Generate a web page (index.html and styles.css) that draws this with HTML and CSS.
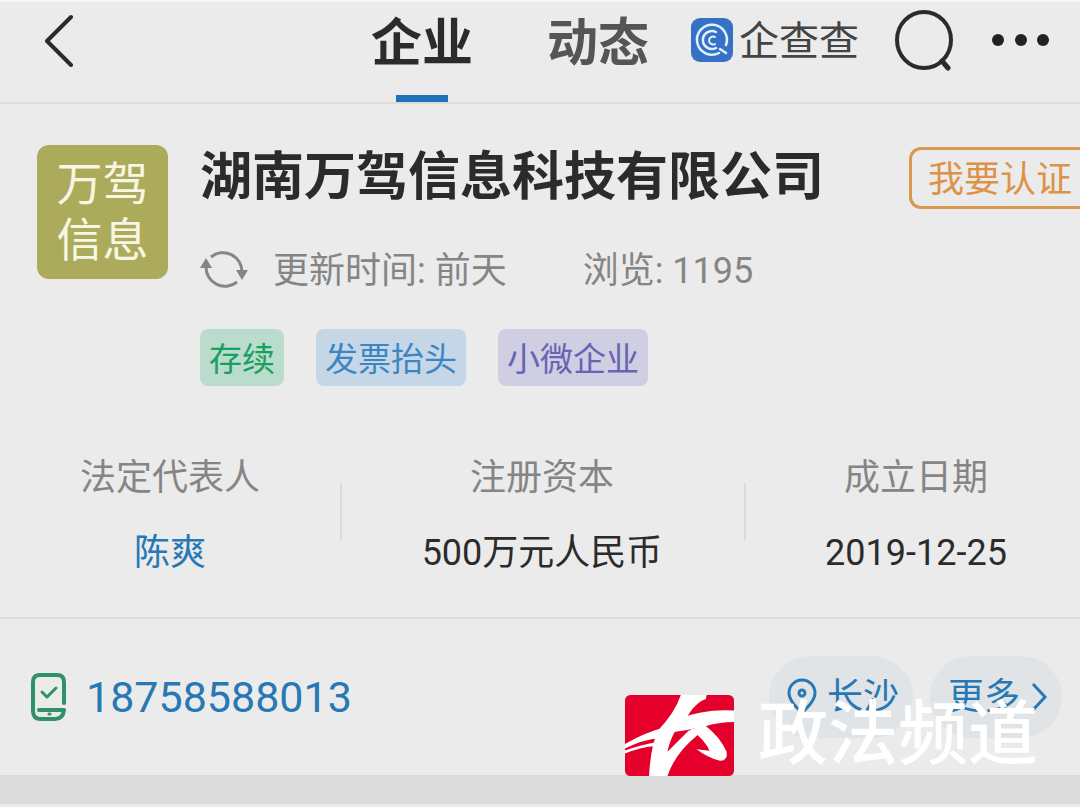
FILE: index.html
```
<!DOCTYPE html>
<html lang="zh-CN">
<head>
  <meta charset="utf-8">
  <meta name="viewport" content="width=device-width, initial-scale=1.0">
  <title>湖南万驾信息科技有限公司</title>
  <link rel="stylesheet" href="styles.css">
</head>
<body>
  <header class="topbar">
    <button class="icon-btn" aria-label="返回">
      <svg width="30" height="54" viewBox="0 0 30 54"><path d="M27 4 3 28l24 24" fill="none" stroke="#2b2b2b" stroke-width="4" stroke-linecap="round" stroke-linejoin="round"/></svg>
    </button>
    <nav class="tabs">
      <a class="tab active" href="#company">企业</a>
      <a class="tab" href="#news">动态</a>
    </nav>
    <div class="brand">
      <svg width="42" height="44" viewBox="0 0 42 44">
        <rect width="42" height="44" rx="9" fill="#3671c6"/>
        <g fill="none" stroke="#dff0ff" stroke-linecap="round">
          <path d="M28 35A15 15 0 1 1 35 27" stroke-width="2.500"/>
          <path d="M25 14A9 9 0 1 0 25 30" stroke-width="2.500"/>
          <path d="M24 19A4 4 0 1 0 24 26" stroke-width="2"/>
          <path d="M29 31l6 4" stroke-width="2.500"/>
        </g>
      </svg>
      <span>企查查</span>
    </div>
    <button class="icon-btn search" aria-label="搜索">
      <svg width="60" height="62" viewBox="0 0 60 62"><ellipse cx="30" cy="31" rx="27" ry="28" fill="none" stroke="#2b2b2b" stroke-width="4"/><path d="M48 52l6 7" stroke="#2b2b2b" stroke-width="5" stroke-linecap="round"/></svg>
    </button>
    <button class="icon-btn more" aria-label="更多操作">
      <svg width="62" height="14" viewBox="0 0 62 14" fill="#222"><circle cx="8" cy="7" r="6"/><circle cx="31" cy="7" r="6"/><circle cx="53" cy="7" r="6"/></svg>
    </button>
  </header>

  <main>
    <section class="company" id="company">
      <div class="avatar">万驾<br>信息</div>
      <div class="info">
        <div class="title-row">
          <h1>湖南万驾信息科技有限公司</h1>
          <button class="certify">我要认证</button>
        </div>
        <div class="meta">
          <svg width="48" height="44" viewBox="0 0 48 44">
            <g fill="none" stroke="#858585" stroke-width="3"><path d="M11 8A19 19 0 0 1 42 23"/><path d="M37 33A19 19 0 0 1 6 18"/></g>
            <path d="M36 21h12l-6 10zM0 19h12L6 9z" fill="#858585"/>
          </svg>
          <span class="updated">更新时间: 前天</span>
          <span>浏览: 1195</span>
        </div>
        <div class="tags">
          <span class="tag green">存续</span>
          <span class="tag blue">发票抬头</span>
          <span class="tag purple">小微企业</span>
        </div>
      </div>
    </section>

    <dl class="stats">
      <div><dt>法定代表人</dt><dd><a href="#person">陈爽</a></dd></div>
      <div><dt>注册资本</dt><dd>500万元人民币</dd></div>
      <div><dt>成立日期</dt><dd>2019-12-25</dd></div>
    </dl>

    <section class="contact">
      <svg width="36" height="48" viewBox="0 0 36 48" fill="none" stroke="#2f9166" stroke-width="4" stroke-linecap="round" stroke-linejoin="round">
        <path d="M34 30V9q0-7-7-7H10Q3 2 3 9v29q0 8 8 8h14q8 0 9-9H9"/>
        <path d="M12 19l5 5 9-9" stroke-width="3"/><path d="M19 41h1" stroke-width="3"/>
      </svg>
      <a class="phone" href="tel:18758588013">18758588013</a>
      <button class="pill">
        <svg width="30" height="38" viewBox="0 0 30 38" fill="none" stroke="#2778b5" stroke-width="3"><path d="M15 35C9 29 2 22 2 15a13 13 0 0 1 26 0c0 7-7 14-13 20z"/><circle cx="15" cy="15" r="3"/></svg>
        长沙
      </button>
      <button class="pill">
        更多
        <svg width="18" height="30" viewBox="0 0 18 30" fill="none" stroke="#2778b5" stroke-width="3"><path d="M3 2l12 13L3 28"/></svg>
      </button>
    </section>
  </main>

  <div class="watermark">
    <svg width="109" height="81" viewBox="0 0 326 245" preserveAspectRatio="none">
      <rect width="326" height="245" rx="16" fill="#e4002b"/>
      <g fill="#fff">
        <path d="M167 0H244L242 12 228 18Q202 36 186 66L152 106Q134 136 127 172L190 108 244 92 214 124Q150 176 127 245H72Q76 160 98 108 150 52 167 0z"/>
        <path d="M326 47V82Q280 82 236 96L186 106 146 112 164 72Q232 42 326 47z"/>
        <path d="M196 104L240 92Q284 126 304 172 308 200 284 199 248 190 214 164L253 169Q240 136 196 104z"/>
        <path d="M0 148Q64 112 112 100L100 130Q50 136 0 162zM0 168Q50 150 92 143V154Q50 156 0 177z"/>
      </g>
    </svg>
    <span>政法频道</span>
  </div>
</body>
</html>
```

FILE: styles.css
```
* {
  box-sizing: border-box;
}

body {
  margin: 0;
  background: #ebebeb;
  color: #2b2b2b;
  font-family: Roboto, "Noto Sans CJK SC", sans-serif;
  font-size: 36px;
  line-height: 52px;
}

a {
  color: #2778b5;
  text-decoration: none;
}

button {
  font: inherit;
  border: 0;
  padding: 0;
  background: none;
  color: inherit;
  cursor: pointer;
}

svg {
  display: block;
  flex: none;
}

.topbar {
  display: flex;
  align-items: center;
  height: 104px;
  padding: 0 28px 24px 44px;
  border-top: 2px solid #f6f6f6;
  border-bottom: 2px solid #dcdcdc;
}

.tabs {
  display: flex;
  gap: 74px;
  margin-left: auto;
  align-self: flex-start;
}

.tab {
  display: flex;
  flex-direction: column;
  align-items: center;
  height: 100px;
  font-size: 51px;
  font-weight: bold;
  line-height: 84px;
  color: #555;
}

.tab.active {
  color: #2b2b2b;
}

.tab.active::after {
  content: "";
  width: 52px;
  height: 7px;
  margin-top: auto;
  background: #1f72b8;
}

.brand {
  display: flex;
  align-items: center;
  gap: 6px;
  margin-left: 42px;
  font-size: 40px;
  line-height: 56px;
  color: #444;
}

.brand span {
  padding-top: 4px;
}

.search {
  margin-left: 35px;
}

.more {
  margin-left: 36px;
}

.company {
  display: flex;
  gap: 32px;
  padding: 41px 0 0 37px;
}

.avatar {
  flex: none;
  width: 131px;
  height: 134px;
  padding-top: 11px;
  border-radius: 12px;
  background: #acaa5b;
  color: #f7f6e4;
  font-size: 46px;
  line-height: 56px;
  text-align: center;
}

.info {
  flex: 1;
}

.title-row {
  display: flex;
  justify-content: space-between;
  align-items: center;
  height: 66px;
}

h1 {
  margin: 0;
  font-size: 52px;
  line-height: 64px;
}

.certify {
  height: 62px;
  padding: 4px 8px 0 16px;
  border: 3px solid #d9984f;
  border-right: 0;
  border-radius: 12px 0 0 12px;
  color: #dc9348;
}

.meta {
  display: flex;
  align-items: center;
  margin-top: 34px;
  color: #858585;
}

.updated {
  margin: 0 76px 0 25px;
}

.tags {
  display: flex;
  gap: 32px;
  margin-top: 32px;
}

.tag {
  height: 57px;
  padding: 0 9px;
  border-radius: 8px;
  font-size: 33px;
  line-height: 62px;
}

.green {
  background: #b9dccd;
  color: #18a060;
}

.blue {
  background: #c5d7e6;
  color: #3d86c2;
}

.purple {
  background: #cfcee2;
  color: #6a62b4;
}

.stats {
  display: grid;
  grid-template-columns: 340fr 404fr 336fr;
  margin: 0;
  padding: 66px 0 38px;
  border-bottom: 2px solid #dcdcdc;
  text-align: center;
}

.stats div {
  position: relative;
}

.stats div:last-child {
  padding-left: 8px;
}

.stats div + div::before {
  content: "";
  position: absolute;
  left: 0;
  top: 31px;
  width: 2px;
  height: 57px;
  background: #dadada;
}

dt {
  color: #858585;
}

dd {
  margin: 23px 0 0;
}

.contact {
  display: flex;
  align-items: center;
  height: 156px;
  padding: 0 18px 0 30px;
}

.phone {
  margin: 0 auto 0 20px;
  font-size: 43px;
}

.pill {
  display: flex;
  align-items: center;
  gap: 10px;
  height: 82px;
  margin-left: 17px;
  padding: 0 14px 0 18px;
  border-radius: 41px;
  background: #e0e4e7;
  color: #2778b5;
}

main {
  border-bottom: 29px solid #dcdcdc;
}

/* channel logo over the bottom right corner */
.watermark {
  position: absolute;
  right: 42px;
  top: 695px;
  display: flex;
  align-items: center;
  gap: 24px;
  color: #fff;
  font-size: 70px;
  font-weight: 500;
  line-height: 81px;
}
```
